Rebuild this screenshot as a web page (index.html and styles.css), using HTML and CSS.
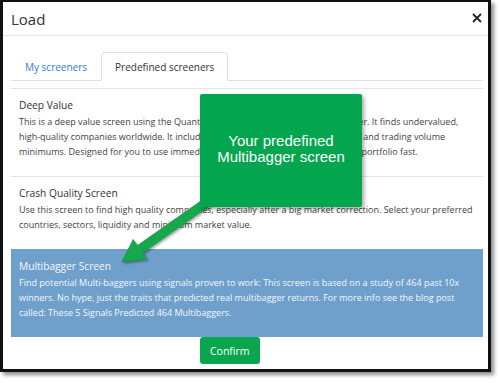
FILE: index.html
```html
<!DOCTYPE html>
<html>
<head>
<meta charset="utf-8">
<link rel="stylesheet" href="styles.css">
</head>
<body>
<div class="frame">
  <div class="modal-header">
    <h4 class="title">Load</h4>
    <span class="close" aria-label="Close">
      <svg width="10" height="10" viewBox="0 0 10 10"><path d="M1 1 L9 9 M9 1 L1 9" stroke="#222" stroke-width="1.8" fill="none"/></svg>
    </span>
  </div>
  <div class="modal-body">
    <ul class="tabs">
      <li class="tab">My screeners</li>
      <li class="tab active">Predefined screeners</li>
    </ul>
    <div class="list">
      <div class="item">
        <div class="item-title">Deep Value</div>
        <p class="desc">This is a deep value screen using the Quantitative Value methodology as a screener. It finds undervalued,<br>high-quality companies worldwide. It includes minimum market cap, size, liquidity and trading volume<br>minimums. Designed for you to use immediately so you can build up a diversified portfolio fast.</p>
      </div>
      <div class="item">
        <div class="item-title">Crash Quality Screen</div>
        <p class="desc">Use this screen to find high quality companies, especially after a big market correction. Select your preferred<br>countries, sectors, liquidity and minimum market value.</p>
      </div>
      <div class="item selected">
        <div class="item-title">Multibagger Screen</div>
        <p class="desc">Find potential Multi-baggers using signals proven to work: This screen is based on a study of 464 past 10x<br>winners. No hype, just the traits that predicted real multibagger returns. For more info see the blog post<br>called: These 5 Signals Predicted 464 Multibaggers.</p>
      </div>
    </div>
    <div class="actions">
      <button class="btn-confirm">Confirm</button>
    </div>
  </div>
</div>
<svg class="arrow" width="500" height="383" viewBox="0 0 500 383">
  <defs>
    <filter id="sh" x="-20%" y="-20%" width="140%" height="140%">
      <feDropShadow dx="1.5" dy="1.5" stdDeviation="1.2" flood-color="#000" flood-opacity="0.35"/>
    </filter>
  </defs>
  <polygon filter="url(#sh)" points="122,262 146.9,259.1 142.6,253 214.6,202.3 209.4,194.9 137.4,245.6 133.1,239.5" fill="#17a84c" stroke="#0d8a3a" stroke-width="0.6"/>
</svg>
<div class="callout">Your predefined<br>Multibagger screen</div>
</body>
</html>
```
FILE: styles.css
```css
html, body {
  margin: 0;
  padding: 0;
  background: #fff;
}
body {
  position: relative;
  width: 500px;
  height: 383px;
  overflow: hidden;
  font-family: "Open Sans", "Noto Sans", sans-serif;
  color: #333;
}
.frame {
  box-sizing: border-box;
  width: 491px;
  height: 372px;
  border: 3px solid #111;
  border-top-width: 2px;
  box-shadow: 3px 3px 4px rgba(0,0,0,0.45);
  background: #fff;
}
.modal-header {
  height: 33px;
  border-bottom: 1px solid #e6e6e6;
  display: flex;
  align-items: center;
  justify-content: space-between;
  padding: 0 6px 0 8px;
}
.title {
  margin: 0;
  font-size: 15px;
  font-weight: 400;
  color: #333;
}
.close {
  display: flex;
  width: 10px;
  height: 10px;
  margin-top: -1px;
}
.modal-body {
  padding: 16px 5px 0 8px;
}
.tabs {
  list-style: none;
  margin: 0;
  padding: 0;
  display: flex;
  height: 28px;
  border-bottom: 1px solid #dee2e6;
}
.tab {
  box-sizing: border-box;
  height: 29px;
  padding: 0 13px;
  display: flex;
  align-items: center;
  font-size: 10px;
  color: #2f7de1;
  border: 1px solid transparent;
  border-radius: 4px 4px 0 0;
}
.tab.active {
  color: #333;
  border-color: #dee2e6 #dee2e6 #fff;
  background: #fff;
}
.list {
  margin-top: 7px;
}
.item {
  border-top: 1px solid #e6e6e6;
  padding: 9px 8px 17px;
}
.item-title {
  font-size: 10.2px;
  line-height: 15px;
  color: #333;
}
.desc {
  margin: 1px 0 0;
  font-size: 9px;
  line-height: 15px;
  color: #3f3f3f;
  white-space: nowrap;
}
.item.selected {
  background: #6fa0cb;
  border-top-color: #6fa0cb;
}
.item.selected .item-title,
.item.selected .desc {
  color: #f3f7fb;
}
.actions {
  display: flex;
  padding-left: 189px;
}
.btn-confirm {
  height: 27px;
  padding: 0 10px;
  border: 0;
  border-radius: 3px;
  background: #0aa64e;
  color: #fff;
  font-family: "Open Sans", "Noto Sans", sans-serif;
  font-size: 10.5px;
}
.arrow {
  position: absolute;
  left: 0;
  top: 0;
  pointer-events: none;
}
.callout {
  position: absolute;
  left: 200px;
  top: 94px;
  width: 162px;
  height: 113px;
  box-sizing: border-box;
  background: #03a64f;
  border-radius: 2px;
  box-shadow: 2px 2px 4px rgba(0,0,0,0.35);
  color: #fff;
  font-family: "Liberation Sans", Arial, sans-serif;
  font-size: 15px;
  line-height: 16px;
  text-align: center;
  display: flex;
  align-items: center;
  justify-content: center;
  padding-bottom: 4px;
}
```
